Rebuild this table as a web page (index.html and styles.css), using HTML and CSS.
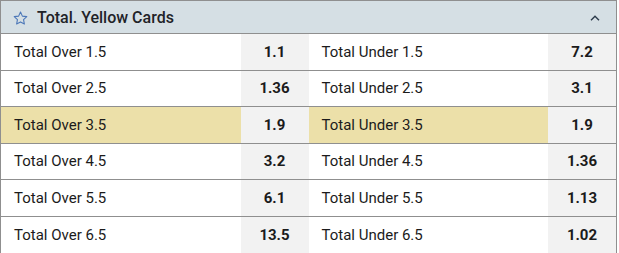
FILE: index.html
```html
<!DOCTYPE html>
<html>
<head>
<meta charset="utf-8">
<link rel="stylesheet" href="styles.css">
</head>
<body>
<div class="market">
  <div class="market-head">
    <svg class="star" width="15" height="14" viewBox="0 0 24 23"><path d="M12 1.8l3.1 6.6 7.2.9-5.3 5 1.4 7.1L12 17.9l-6.4 3.5L7 14.3l-5.3-5 7.2-.9z" fill="none" stroke="#4d78b8" stroke-width="1.8" stroke-linejoin="round"/></svg>
    <span class="title">Total. Yellow Cards</span>
    <svg class="chev" width="10" height="6" viewBox="0 0 10 6"><path d="M1 5.3L5 1.3l4 4" fill="none" stroke="#2b3a4a" stroke-width="1.4"/></svg>
  </div>
  <div class="row"><div class="cell"><span class="label">Total Over 1.5</span><span class="odd">1.1</span></div><div class="cell"><span class="label">Total Under 1.5</span><span class="odd">7.2</span></div></div>
  <div class="row"><div class="cell"><span class="label">Total Over 2.5</span><span class="odd">1.36</span></div><div class="cell"><span class="label">Total Under 2.5</span><span class="odd">3.1</span></div></div>
  <div class="row hl"><div class="cell"><span class="label">Total Over 3.5</span><span class="odd">1.9</span></div><div class="cell"><span class="label">Total Under 3.5</span><span class="odd">1.9</span></div></div>
  <div class="row"><div class="cell"><span class="label">Total Over 4.5</span><span class="odd">3.2</span></div><div class="cell"><span class="label">Total Under 4.5</span><span class="odd">1.36</span></div></div>
  <div class="row"><div class="cell"><span class="label">Total Over 5.5</span><span class="odd">6.1</span></div><div class="cell"><span class="label">Total Under 5.5</span><span class="odd">1.13</span></div></div>
  <div class="row"><div class="cell"><span class="label">Total Over 6.5</span><span class="odd">13.5</span></div><div class="cell"><span class="label">Total Under 6.5</span><span class="odd">1.02</span></div></div>
</div>
</body>
</html>
```
FILE: styles.css
```css
html, body { margin: 0; padding: 0; background: #fff; }
body { font-family: Roboto, "Liberation Sans", sans-serif; color: #1b1b1b; }
.market {
  width: 615px;
  border: 1px solid #8f8f8f;
  border-bottom: none;
}
.market-head {
  height: 32px;
  background: #d5dfe4;
  border-bottom: 1px solid #8f8f8f;
  display: flex;
  align-items: center;
  padding: 0 16px 0 12px;
}
.star { margin-right: 9px; margin-top: 1px; }
.title { font-size: 16px; font-weight: 500; flex: 1; color: #1f2328; }
.chev { margin-top: 1px; }
.row {
  display: flex;
  height: 35.5px;
  border-bottom: 1px solid #8f8f8f;
}
.row:first-of-type { height: 36px; }
.row:last-child { border-bottom: none; height: 37px; }
.cell { flex: 1; display: flex; }
.label { flex: 1; display: flex; align-items: center; padding-left: 13px; font-size: 15px; }
.odd {
  width: 68px;
  background: #f2f2f2;
  display: flex; align-items: center; justify-content: center;
  font-size: 15px; font-weight: 700;
}
.row.hl .label { background: #ece0a9; }
```
